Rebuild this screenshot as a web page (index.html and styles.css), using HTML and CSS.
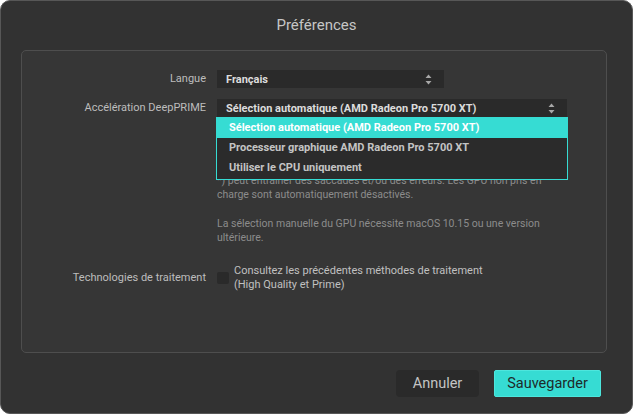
FILE: index.html
```html
<!DOCTYPE html>
<html lang="fr">
<head>
  <meta charset="UTF-8" />
  <title>Préférences</title>
  <link rel="stylesheet" href="styles.css">
</head>
<body>
  <div class="window">
    <div class="title">Préférences</div>

    <div class="panel">
      <div class="row">
        <label class="label">Langue</label>
        <div class="select short">
          <span>Français</span>
          <svg class="arrows" width="7" height="11" viewBox="0 0 7 11"><path d="M3.5 0.5 L6.5 4 L0.5 4 Z M3.5 10.5 L6.5 7 L0.5 7 Z" fill="#a8a8a8"/></svg>
        </div>
      </div>

      <div class="row">
        <label class="label">Accélération DeepPRIME</label>
        <div class="field">
          <div class="combo">
            <div class="select">
              <span>Sélection automatique (AMD Radeon Pro 5700 XT)</span>
              <svg class="arrows" width="7" height="11" viewBox="0 0 7 11"><path d="M3.5 0.5 L6.5 4 L0.5 4 Z M3.5 10.5 L6.5 7 L0.5 7 Z" fill="#a8a8a8"/></svg>
            </div>
            <ul class="menu">
              <li class="active">Sélection automatique (AMD Radeon Pro 5700 XT)</li>
              <li>Processeur graphique AMD Radeon Pro 5700 XT</li>
              <li>Utiliser le CPU uniquement</li>
            </ul>
          </div>
          <p class="hint">
            L'accélération DeepPRIME utilise le processeur graphique<br>
            disponible. Un GPU non testé ou non recommandé (marqué<br>
            d'un astérisque<br>
            *) peut entraîner des saccades et/ou des erreurs. Les GPU non pris en<br>
            charge sont automatiquement désactivés.
          </p>
          <p class="hint">La sélection manuelle du GPU nécessite macOS 10.15 ou une version ultérieure.</p>
        </div>
      </div>

      <div class="row tech">
        <label class="label">Technologies de traitement</label>
        <div class="check">
          <span class="box"></span>
          <span class="check-text">Consultez les précédentes méthodes de traitement<br>(High Quality et Prime)</span>
        </div>
      </div>
    </div>

    <div class="footer">
      <button class="btn">Annuler</button>
      <button class="btn primary">Sauvegarder</button>
    </div>
  </div>
</body>
</html>
```

FILE: styles.css
```css
body {
  margin: 0;
  background: #fff;
  font-family: Roboto, 'Liberation Sans', sans-serif;
}
.window {
  width: 633px;
  height: 414px;
  box-sizing: border-box;
  border: 1px solid #575757;
  border-radius: 10px;
  background: #323232;
  display: flex;
  flex-direction: column;
}
.title {
  height: 49px;
  line-height: 48px;
  text-align: center;
  font-size: 15px;
  color: #c6c6c6;
}
.panel {
  margin: 0 25px 0 20px;
  height: 303px;
  box-sizing: border-box;
  border: 1px solid #4e4e4e;
  border-radius: 5px;
  background: #363636;
  padding-top: 19px;
}
.row {
  display: grid;
  grid-template-columns: 184px 1fr;
  column-gap: 11px;
  margin-bottom: 11px;
}
.label {
  text-align: right;
  font-size: 11px;
  color: #bdbdbd;
  line-height: 18px;
}
.select {
  height: 18px;
  width: 350px;
  box-sizing: border-box;
  background: #2a2a2a;
  display: flex;
  align-items: center;
  justify-content: space-between;
  padding: 0 12px 0 9px;
  font-size: 11px;
  font-weight: bold;
  color: #dcdcdc;
}
.select.short { width: 227px; }
.combo { position: relative; }
.menu {
  position: absolute;
  top: 18px;
  left: -1px;
  width: 350px;
  margin: 0;
  padding: 0 0 1px;
  list-style: none;
  background: #2b2b2b;
  border: 1px solid #36dcd3;
  z-index: 2;
}
.menu li {
  height: 20px;
  line-height: 20px;
  padding-left: 12px;
  font-size: 11px;
  font-weight: bold;
  color: #c4c4c4;
}
.menu li.active {
  background: #36dcd3;
  color: #fff;
}
.hint {
  margin: 13px 0 0;
  width: 352px;
  font-size: 10.5px;
  line-height: 14.5px;
  color: #8c8c8c;
}
.hint + .hint { margin-top: 14px; }
.tech { margin-top: 18px; align-items: center; }
.tech .label { line-height: 14px; }
.check {
  display: flex;
  align-items: center;
  gap: 5px;
}
.check-text {
  font-size: 11px;
  line-height: 14px;
  color: #c0c0c0;
}
.box {
  width: 12px;
  height: 12px;
  border-radius: 2px;
  background: #2a2a2a;
  flex: none;
}
.footer {
  flex: 1;
  display: flex;
  justify-content: flex-end;
  align-items: flex-start;
  gap: 15px;
  padding: 17px 31px 0 0;
}
.btn {
  width: 83px;
  height: 27px;
  padding: 0;
  border: none;
  border-radius: 4px;
  background: #2a2a2a;
  color: #c4c4c4;
  font-family: Roboto, 'Liberation Sans', sans-serif;
  font-size: 14.5px;
}
.btn.primary {
  width: 107px;
  background: #36dcd3;
  border: 1px solid #4de6dd;
  border-radius: 2px;
  color: #1e2a2a;
}
```
